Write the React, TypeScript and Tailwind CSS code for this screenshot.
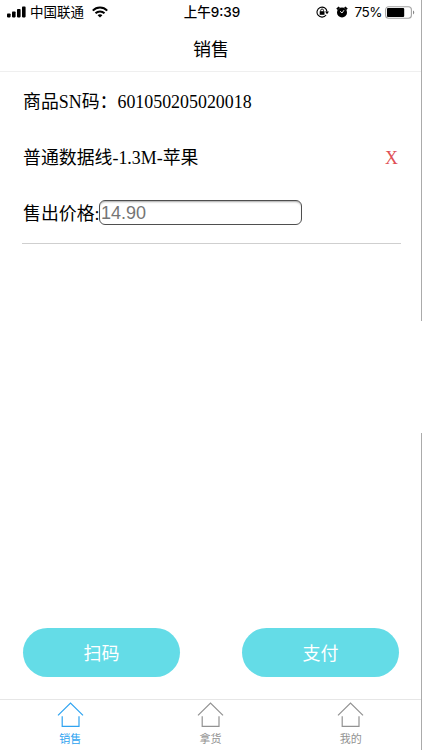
import clsx from "clsx";

const tabs = [
  { label: "销售", active: true },
  { label: "拿货", active: false },
  { label: "我的", active: false },
];

const HomeIcon = () => (
  <svg width="28" height="26" viewBox="0 0 28 26" fill="none" stroke="currentColor" strokeWidth="1.2">
    <path d="M1 13.4 13.5 1 26 13.4" />
    <path d="M5.2 14.2V24.4H22V14.2" />
  </svg>
);

const StatusBar = () => (
  <div className="flex h-6 items-center pl-[7px] pr-1.5 text-black">
    <div className="flex flex-1 items-center">
      <svg width="19" height="12" viewBox="0 0 19 12" fill="currentColor">
        <rect x="0" y="7.4" width="3.6" height="4" rx="0.8" />
        <rect x="5" y="5.4" width="3.6" height="6" rx="0.8" />
        <rect x="10" y="3" width="3.6" height="8.4" rx="0.8" />
        <rect x="15" y="0.6" width="3.6" height="10.8" rx="0.8" />
      </svg>
      <span className="ml-[4px] text-[13.5px] leading-6">中国联通</span>
      <svg className="ml-[8px]" width="16" height="12" viewBox="0 0 16 12" fill="none" stroke="currentColor" strokeWidth="2">
        <path d="M0.8 4.6C4.8 0.4 11.2 0.4 15.2 4.6" />
        <path d="M3.5 7.3C6 4.8 10 4.8 12.5 7.3" />
        <path d="M8 11.6 5.6 9.2C6.9 8 9.1 8 10.4 9.2Z" fill="currentColor" stroke="none" />
      </svg>
    </div>
    <div className="pl-[2px] text-[13.5px] font-medium leading-6">上午9:39</div>
    <div className="flex flex-1 items-center justify-end">
      {/* rotation lock */}
      <svg width="13" height="12" viewBox="0 0 13 12" fill="none" stroke="currentColor">
        <path d="M10.1 9A5 5 0 1 1 11 5.6" strokeWidth="1.1" />
        <path d="M9 5.6H13L11 8.2Z" fill="currentColor" stroke="none" />
        <rect x="3.7" y="5.2" width="4.8" height="3.6" fill="currentColor" stroke="none" />
        <path d="M4.7 5.4V4.4a1.4 1.4 0 0 1 2.8 0V5.4" strokeWidth="0.9" />
      </svg>
      {/* alarm */}
      <svg className="ml-[7px]" width="12" height="12" viewBox="0 0 12 12" fill="none" stroke="currentColor">
        <circle cx="6" cy="6.5" r="5" fill="currentColor" stroke="none" />
        <path d="M0.9 3.2 3.3 1.1M11.1 3.2 8.7 1.1" strokeWidth="1.9" />
        <path d="M4 5.2 6 7 8 4.2" stroke="#fff" strokeWidth="0.9" />
      </svg>
      <span className="ml-[7px] text-[13.5px] leading-6 tracking-[-0.5px]">75%</span>
      <svg className="ml-[3px]" width="30" height="13" viewBox="0 0 30 13" fill="none">
        <rect x="0.6" y="0.7" width="25.8" height="11.6" rx="3" stroke="#a3a3a3" strokeWidth="1.1" />
        <rect x="2" y="2" width="17.2" height="9" rx="1" fill="#000" />
        <path d="M28 4.6C29.7 5.4 29.7 7.6 28 8.4Z" fill="#888" />
      </svg>
    </div>
  </div>
);

const App = () => {
  return (
    <div className="flex h-[750px] w-[422px] bg-white font-['Liberation_Sans','Noto_Sans_CJK_SC',sans-serif] text-black">
      <div className="flex w-[421px] flex-col">
        <div className="font-[Inter,'Noto_Sans_CJK_SC',sans-serif]">
          <StatusBar />
        </div>
        <header className="flex h-12 items-center justify-center border-b border-[#efefef] pl-px pt-[5px] text-[18px]">
          销售
        </header>

        <main className="flex-1 px-[22px] pt-px font-['Liberation_Serif','Noto_Sans_CJK_SC',serif] text-[17.9px]">
          <div className="flex h-14 items-center pl-px pt-[2px]">商品SN码：601050205020018</div>
          <div className="flex h-14 items-center justify-between pl-px pr-px pt-[2px]">
            <span>普通数据线-1.3M-苹果</span>
            <button className="text-[#e05055]">X</button>
          </div>
          <div className="flex h-14 items-center pl-px">
            <span className="w-[76px] whitespace-nowrap pt-[2px]">售出价格:</span>
            <input
              className="mb-px h-[25px] w-[203px] rounded-[6px] border border-[#4f4f4f] p-0 pl-px pt-[2px] font-['Liberation_Sans',sans-serif] text-[18px] text-[#757575] shadow-[inset_0_2px_2px_-1px_rgba(0,0,0,0.35)]"
              defaultValue="14.90"
            />
          </div>
          <div className="mt-[2px] h-px w-[379px] bg-[#cfcfcf]" />
        </main>

        <div className="mb-[22px] flex justify-between pl-[23px] pr-[22px] text-[18px] text-white">
          <button className="h-[49px] w-[157px] rounded-full bg-[#64dce7] pt-[3px]">扫码</button>
          <button className="h-[49px] w-[157px] rounded-full bg-[#64dce7] pt-[3px]">支付</button>
        </div>

        <nav className="flex h-[51px] border-t border-[#e6e6e6]">
          {tabs.map((tab) => (
            <div
              key={tab.label}
              className={clsx(
                "flex flex-1 flex-col items-center pt-[2px]",
                tab.active ? "text-[#2fa3f0]" : "text-[#929292]"
              )}
            >
              <div className="pl-px">
                <HomeIcon />
              </div>
              <span className="mt-[3px] text-[11px] leading-4">{tab.label}</span>
            </div>
          ))}
        </nav>
      </div>

      {/* right edge, broken in the middle */}
      <div className="flex w-px flex-col justify-between">
        <div className="h-[321px] bg-[#ababab]" />
        <div className="h-[317px] bg-[#ababab]" />
      </div>
    </div>
  );
};

export default App;
